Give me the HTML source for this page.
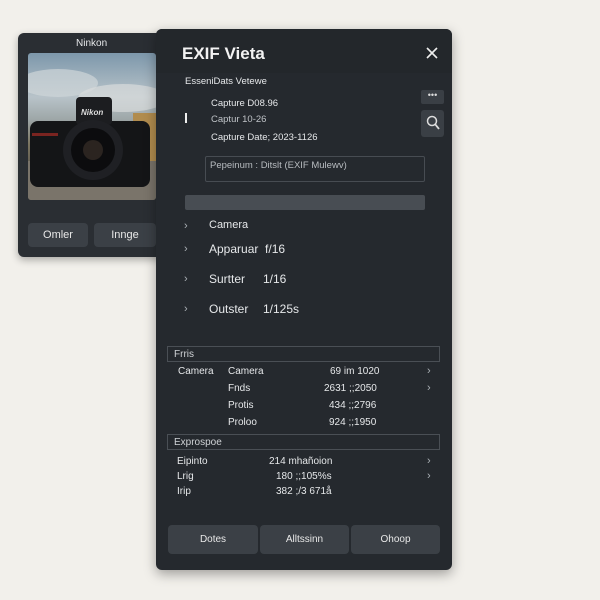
<!DOCTYPE html><html><head><style>
*{margin:0;padding:0;box-sizing:border-box}
body{width:600px;height:600px;background:#f2f0eb;font-family:"Liberation Sans",sans-serif;position:relative;overflow:hidden;color:#e6e8ea}
.a{position:absolute}
.card{left:18px;top:33px;width:150px;height:224px;background:#2a2e33;border-radius:6px;box-shadow:0 3px 8px rgba(0,0,0,.3)}
.img{left:28px;top:53px;width:128px;height:147px;border-radius:3px;overflow:hidden;background:linear-gradient(#7d97ab 0%,#b8c3c9 30%,#9ea7a8 45%,#7b7560 62%,#5b564d 80%,#6d6659 100%)}
.btn{background:#3b4046;border-radius:4px;font-size:11px;text-align:center;color:#e8e8e8}
.panel{left:156px;top:29px;width:296px;height:541px;background:#25292e;border-radius:6px;box-shadow:0 4px 12px rgba(0,0,0,.35)}
.t{font-size:11px;white-space:nowrap}
.chev{color:#aab0b5;font-size:11px}
.sec{border:1px solid #4a4f55;height:16px;font-size:10px;padding:2px 6px;color:#d0d3d6}
</style></head><body>
<div class="a card"></div>
<div class="a t" style="left:76px;top:38px;font-size:10px">Ninkon</div>
<div class="a img">
<svg width="128" height="147" viewBox="0 0 128 147">
<ellipse cx="30" cy="30" rx="40" ry="14" fill="#cfd5d8" opacity=".7"/>
<ellipse cx="95" cy="45" rx="45" ry="14" fill="#d8dcdc" opacity=".7"/>
<rect x="105" y="60" width="23" height="50" fill="#b18c4e"/>
<rect x="0" y="108" width="128" height="39" fill="#7a746a"/>
<rect x="2" y="68" width="120" height="66" rx="8" fill="#141517"/>
<rect x="48" y="44" width="36" height="28" rx="4" fill="#1c1d20"/>
<text x="53" y="62" font-size="8" font-weight="bold" font-style="italic" fill="#ddd" font-family="Liberation Sans">Nikon</text>
<circle cx="65" cy="97" r="30" fill="#1f2024"/>
<circle cx="65" cy="97" r="22" fill="#0c0c0e"/>
<circle cx="65" cy="97" r="10" fill="#2b2420"/>
<rect x="4" y="80" width="26" height="3" fill="#7a2420"/>
</svg></div>
<div class="a btn" style="left:28px;top:223px;width:60px;height:24px;line-height:24px">Omler</div>
<div class="a btn" style="left:94px;top:223px;width:62px;height:24px;line-height:24px">Innge</div>

<div class="a panel"></div>
<div class="a" style="left:156px;top:29px;width:296px;height:44px;background:#23272b;border-radius:6px 6px 0 0"></div>
<div class="a t" style="left:182px;top:44px;font-size:17px;font-weight:bold;color:#f2f2f2">EXIF Vieta</div>
<svg class="a" style="left:426px;top:47px" width="12" height="12"><path d="M1 1L11 11M11 1L1 11" stroke="#eee" stroke-width="1.6"/></svg>
<div class="a t" style="left:185px;top:76px;font-size:9.5px">EsseniDats Vetewe</div>
<div class="a" style="left:421px;top:90px;width:23px;height:14px;background:#3a3f45;border-radius:2px;color:#ddd;font-size:9px;text-align:center;line-height:10px">•••</div>
<div class="a" style="left:421px;top:110px;width:23px;height:27px;background:#3a3f45;border-radius:3px"></div>
<svg class="a" style="left:425px;top:114px" width="16" height="18"><circle cx="7" cy="7" r="4.5" stroke="#ddd" stroke-width="1.5" fill="none"/><path d="M10 10L14 15" stroke="#ddd" stroke-width="1.8"/></svg>
<div class="a" style="left:185px;top:113px;width:2px;height:10px;background:#eee"></div>
<div class="a t" style="left:211px;top:98px;font-size:9.5px">Capture D08.96</div>
<div class="a t" style="left:211px;top:114px;font-size:9.5px;color:#bfc3c7">Captur 10-26</div>
<div class="a t" style="left:211px;top:132px;font-size:9.5px">Capture Date; 2023-1126</div>
<div class="a" style="left:205px;top:156px;width:220px;height:26px;border:1px solid #474c52;border-radius:2px"></div>
<div class="a t" style="left:210px;top:160px;font-size:9.5px;color:#b8bcc0">Pepeinum : Ditslt (EXIF Mulewv)</div>
<div class="a" style="left:185px;top:195px;width:240px;height:15px;background:#484d53;border-radius:2px"></div>
<div class="a chev" style="left:184px;top:220px">›</div><div class="a t" style="left:209px;top:219px">Camera</div>
<div class="a chev" style="left:184px;top:243px">›</div><div class="a t" style="left:209px;top:242px;font-size:12px">Apparuar&nbsp;&nbsp;f/16</div>
<div class="a chev" style="left:184px;top:273px">›</div><div class="a t" style="left:209px;top:272px;font-size:12px">Surtter</div><div class="a t" style="left:263px;top:272px;font-size:12px">1/16</div>
<div class="a chev" style="left:184px;top:303px">›</div><div class="a t" style="left:209px;top:302px;font-size:12px">Outster</div><div class="a t" style="left:263px;top:302px;font-size:12px">1/125s</div>

<div class="a sec" style="left:167px;top:346px;width:273px">Frris</div>
<div class="a t" style="left:178px;top:366px;font-size:10px">Camera</div>
<div class="a t" style="left:228px;top:366px;font-size:10px">Camera</div><div class="a t" style="left:330px;top:366px;font-size:10px">69 im 1020</div><div class="a chev" style="left:427px;top:365px">›</div>
<div class="a t" style="left:228px;top:383px;font-size:10px">Fnds</div><div class="a t" style="left:324px;top:383px;font-size:10px">2631 ;;2050</div><div class="a chev" style="left:427px;top:382px">›</div>
<div class="a t" style="left:228px;top:400px;font-size:10px">Protis</div><div class="a t" style="left:329px;top:400px;font-size:10px">434 ;;2796</div>
<div class="a t" style="left:228px;top:417px;font-size:10px">Proloo</div><div class="a t" style="left:329px;top:417px;font-size:10px">924 ;;1950</div>
<div class="a sec" style="left:167px;top:434px;width:273px">Exprospoe</div>
<div class="a t" style="left:177px;top:456px;font-size:10px">Eipinto</div><div class="a t" style="left:269px;top:456px;font-size:10px">214 mhañoion</div><div class="a chev" style="left:427px;top:455px">›</div>
<div class="a t" style="left:177px;top:471px;font-size:10px">Lrig</div><div class="a t" style="left:276px;top:471px;font-size:10px">180 ;;105%s</div><div class="a chev" style="left:427px;top:470px">›</div>
<div class="a t" style="left:177px;top:486px;font-size:10px">Irip</div><div class="a t" style="left:276px;top:486px;font-size:10px">382 ;/3 671å</div>
<div class="a btn" style="left:168px;top:525px;width:90px;height:29px;line-height:29px;font-size:10px">Dotes</div>
<div class="a btn" style="left:260px;top:525px;width:89px;height:29px;line-height:29px;font-size:10px">Alltssinn</div>
<div class="a btn" style="left:351px;top:525px;width:89px;height:29px;line-height:29px;font-size:10px">Ohoop</div>
</body></html>
